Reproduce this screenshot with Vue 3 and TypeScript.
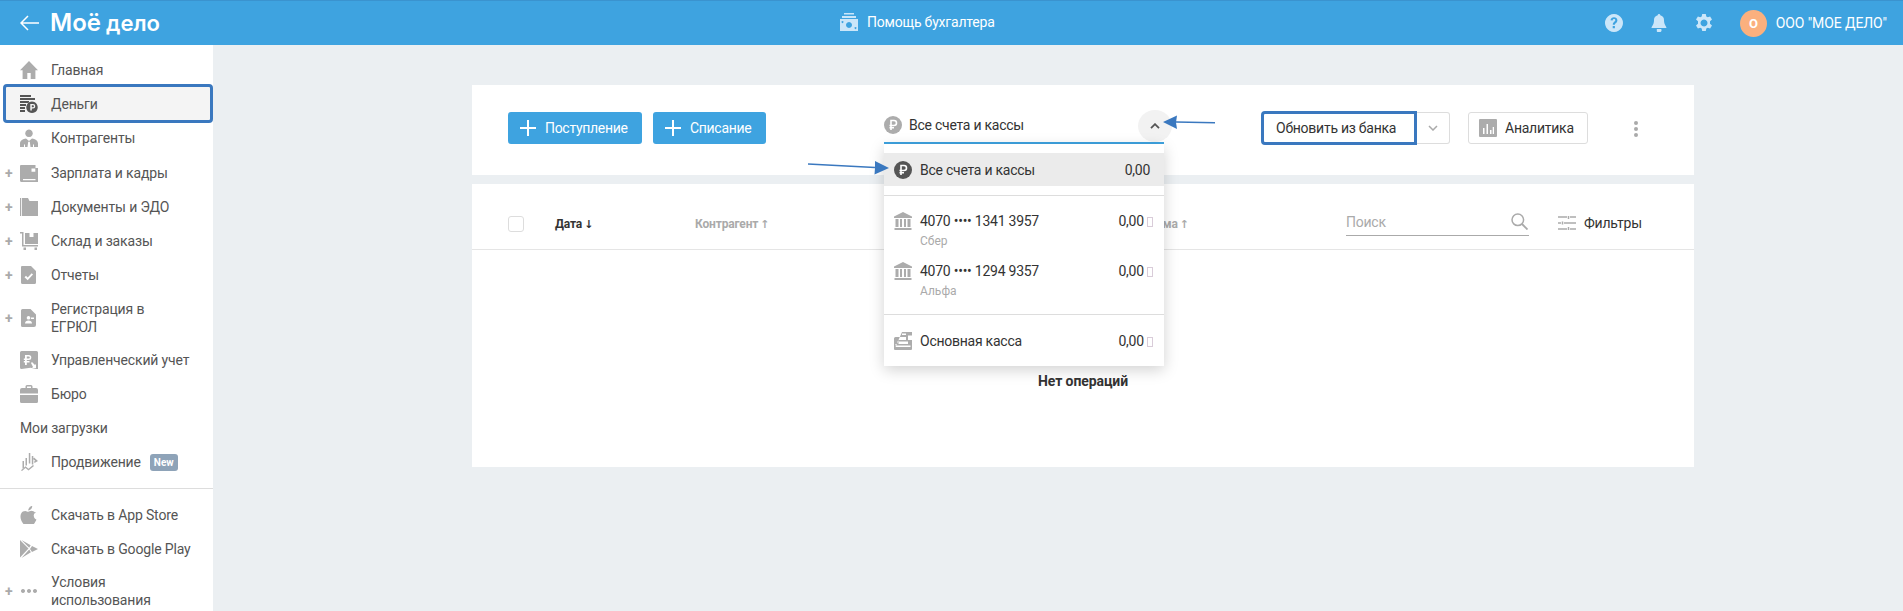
<script setup lang="ts">
interface NavItem { label: string; icon?: string; dark?: string; plus?: boolean; active?: boolean; badge?: string; wrap?: boolean }

const nav: NavItem[] = [
  { label: 'Главная', icon: 'M9 0 18 9.2h-2.6V18h-4.7v-6H7.3v6H2.600V9.200H0Z' },
  { label: 'Деньги', active: true, dark: 'M0 0h11v2H0ZM0 3h15v2H0ZM0 6h9v2H0ZM0 9h6v2H0ZM0 12h5v2H0ZM0 15h5v2H0ZM12 6.500a5.750 5.750 0 1 1-.01 0ZM10.300 9v6.500h1.500v-2H13a2.250 2.250 0 0 0 0-4.500Zm1.500 1.300H13a.95.95 0 0 1 0 1.900h-1.200Z' },
  { label: 'Контрагенты', icon: 'M9 .5a3.800 3.800 0 1 1-.01 0ZM0 18v-3.500C0 11.500 3 10 6 9.500l3 2.500 3-2.500c3 .5 6 2 6 5V18h-4v-2.500h-1V18H5v-2.500H4V18ZM8.200 12.800h1.600l.7 5.200h-3Z' },
  { label: 'Зарплата и кадры', plus: true, icon: 'M1 1h14.500v3H18v14H1.500A1.500 1.500 0 0 1 0 16.500V2a1 1 0 0 1 1-1Zm10.500 3.500v3.200h3.800V4.500ZM3 15v1.200h12.500V15Z' },
  { label: 'Документы и ЭДО', plus: true, icon: 'M0 0h1.200v18H0ZM2 0h6l1.500 3H18v15H2Z' },
  { label: 'Склад и заказы', plus: true, icon: 'M0 0h3.500v13H18v1.500H2V1.500H0ZM5 1h13v11H5Zm4.500 0v4h4V1ZM3.500 15.500h2.500V18H3.500Zm11 0H17V18h-2.500Z' },
  { label: 'Отчеты', plus: true, icon: 'M2 0h9l5 5v11.500a1.500 1.500 0 0 1-1.500 1.500h-12A1.500 1.500 0 0 1 1 16.500V1a1 1 0 0 1 1-1Zm2.500 11.200L6 9.800l1.700 1.800 4-4.300 1.300 1.300-5.300 5.700Z' },
  { label: 'Регистрация в ЕГРЮЛ', plus: true, wrap: true, icon: 'M2.500 0h8l5.500 5.500V16a2 2 0 0 1-2 2H2.500a1.500 1.500 0 0 1-1.500-1.500v-15A1.500 1.500 0 0 1 2.500 0ZM8.500 7a1.800 1.800 0 1 0 .01 0ZM5 14.500c0-1.800 1.500-3 3.500-3s3.500 1.200 3.500 3ZM11 8.500h3V10h-3Z' },
  { label: 'Управленческий учет', icon: 'M1.500 0h15A1.500 1.500 0 0 1 18 1.500V18h-1.500l-6-1.200L1.500 18A1.500 1.500 0 0 1 0 16.500v-15A1.500 1.500 0 0 1 1.500 0ZM5 4v3.500H3.800V9H5v1H3.800v1.400H5V14h1.800v-2.600h2.700V10H6.800V9h2a2.500 2.500 0 0 0 0-5Zm1.800 1.500h2a1 1 0 0 1 0 2h-2ZM11 12l1-1 3 3 1-1v4h-4l1-1Z' },
  { label: 'Бюро', icon: 'M5.500 3V1.500A1.500 1.500 0 0 1 7 0h4a1.500 1.500 0 0 1 1.500 1.500V3H16a2 2 0 0 1 2 2v3.500H0V5a2 2 0 0 1 2-2ZM7 1.500V3h4V1.500ZM0 10h18v6.500a1.500 1.500 0 0 1-1.500 1.500h-15A1.500 1.500 0 0 1 0 16.500Z' },
  { label: 'Мои загрузки' },
  { label: 'Продвижение', badge: 'New', icon: 'M5.500 5h1.500v7.500H5.500ZM8.800 0h1.500v10.500H8.800ZM2.500 8H4v6.800l-1.500 1.500ZM11.800 3h1.500v8.500h-1.500ZM1 17.200l4.500-4 3 2.500 4.500-3.800 1 1-5.500 4.600-3-2.500-3.500 3ZM14 4.500 18 8l-3.500 2-.5-1.500 1.200-.6-2-1.800Z' }
];

const extra: NavItem[] = [
  { label: 'Скачать в App Store', icon: 'M12.200 0c.1 1.300-.4 2.300-1.100 3.100-.8.900-1.800 1.400-2.800 1.300-.1-1.200.4-2.300 1.100-3C10.100.6 11.300 0 12.200 0ZM15.700 6.200c-.1.100-2.100 1.200-2 3.600.1 2.800 2.600 3.800 2.700 3.800-.1.300-.6 1.700-1.600 3.200-.9 1.200-1.700 2.200-3 2.200-1.300 0-1.700-.8-3.200-.8s-2 .8-3.200.8c-1.300.1-2.200-1.200-3-2.400C.8 14.200-.4 10 1.300 7.200c.8-1.400 2.300-2.300 3.900-2.300 1.200 0 2.300.8 3.100.8.700 0 2-1 3.500-.8.600 0 2.400.2 3.900 2.300Z' },
  { label: 'Скачать в Google Play', icon: 'M0 0 8.500 8.500 0 17.500ZM1.500 0l9.200 5.200-1.500 2.600ZM1.500 18l7.700-8.500 1.700 2.700ZM12 6l6 3-6 3-2-3Z' },
  { label: 'Условия использования', plus: true, wrap: true, icon: 'M3 7a2 2 0 1 1-.01 0ZM9 7a2 2 0 1 1-.01 0ZM15 7a2 2 0 1 1-.01 0Z' }
];

const bankRows = [
  { num: '4070 •••• 1341 3957', bank: 'Сбер' },
  { num: '4070 •••• 1294 9357', bank: 'Альфа' }
];
const bankIcon = 'M9 0 18 4.500V6H0V4.500ZM1.500 7h3v8h-3ZM6 7h2v8H6ZM10 7h2v8h-2ZM13.500 7h3v8h-3ZM.5 16h17v2H.5Z';
</script>

<template>
  <div class="app">
    <header class="topbar">
      <div class="brand">
        <svg class="back" viewBox="0 0 19 16" width="19" height="16"><path d="M8 1 1 8l7 7M1 8h18" fill="none" stroke="#fff" stroke-width="1.500" /></svg>
        <span class="logo">Моё <span class="logo-sub">дело</span></span>
      </div>
      <div class="helper">
        <svg viewBox="0 0 18 18" width="18" height="18"><path d="M4 0h10v1.500H4ZM2 3h14v2H2ZM0 6h18v12H0ZM9 9a3 3 0 1 0 .01 0ZM2.500 8a1 1 0 1 0 .01 0ZM15.500 14a1 1 0 1 0 .01 0Z" fill="#cbe6f9" fill-rule="evenodd" /></svg>
        <span>Помощь бухгалтера</span>
      </div>
      <div class="user">
        <svg class="tool" viewBox="0 0 18 18" width="18" height="18"><path d="M9 0a9 9 0 1 1-.01 0ZM9.800 10.700c0-1.500 2.600-2 2.600-4.300 0-2-1.600-3.100-3.400-3.100-1.900 0-3.200 1-3.500 3l2.100.3c.1-1 .6-1.500 1.400-1.500s1.300.5 1.300 1.200c0 1.300-2.500 1.800-2.500 4.400ZM7.700 12v2.300h2.200V12Z" fill="#cbe6f9" fill-rule="evenodd" /></svg>
        <svg class="tool" viewBox="0 0 18 18" width="18" height="18"><path d="M9 0a1.300 1.300 0 0 1 1.300 1.300 5 5 0 0 1 3.700 5c0 4.500 2.500 6.200 2.500 7.700H1.500c0-1.500 2.500-3.200 2.500-7.700a5 5 0 0 1 3.700-5A1.300 1.300 0 0 1 9 0ZM6.800 15h4.400a2.200 2.200 0 0 1-4.400 2.200Z" fill="#cbe6f9" /></svg>
        <svg class="tool last" viewBox="0 0 18 18" width="18" height="18"><path d="M7.200 0h3.600l.5 2.500 1.500.8L15.100 2.400l1.900 3.100-2 1.700v2.600l2 1.700-1.900 3.100-2.300-.9-1.500.8-.5 2.500H7.200l-.5-2.500-1.500-.8-2.300.9L1 11.500l2-1.700V7.200L1 5.500l1.900-3.100 2.300.9 1.500-.8ZM9 5.500a3.500 3.500 0 1 0 .01 0Z" fill="#cbe6f9" fill-rule="evenodd" /></svg>
        <span class="avatar">О</span>
        <span class="company">ООО "МОЕ ДЕЛО"</span>
      </div>
    </header>

    <div class="body">
      <aside class="sidebar">
        <ul class="nav">
          <li v-for="item in nav" :key="item.label" class="nav-row" :class="{ active: item.active, tall: item.wrap }">
            <span class="plus">{{ item.plus ? '+' : '' }}</span>
            <svg v-if="item.icon" class="nav-icon" viewBox="0 0 18 18" width="18" height="18"><path :d="item.icon" fill="#acacac" fill-rule="evenodd" /></svg>
            <svg v-else-if="item.dark" class="nav-icon" viewBox="0 0 18 18" width="18" height="18"><path :d="item.dark" fill="#555" fill-rule="evenodd" /></svg>
            <span class="nav-label" :class="{ wrap: item.wrap }">{{ item.label }}</span>
            <span v-if="item.badge" class="badge">{{ item.badge }}</span>
          </li>
        </ul>
        <div class="nav-divider"></div>
        <ul class="nav">
          <li v-for="item in extra" :key="item.label" class="nav-row">
            <span class="plus">{{ item.plus ? '+' : '' }}</span>
            <svg class="nav-icon" viewBox="0 0 18 18" width="18" height="18"><path :d="item.icon" fill="#acacac" fill-rule="evenodd" /></svg>
            <span class="nav-label" :class="{ wrap: item.wrap }">{{ item.label }}</span>
          </li>
        </ul>
      </aside>

      <main class="main">
        <section class="card toolbar">
          <button class="btn primary wide"><span class="cross"></span>Поступление</button>
          <button class="btn primary narrow"><span class="cross"></span>Списание</button>

          <div class="select">
            <svg viewBox="0 0 18 18" width="18" height="18"><circle cx="9" cy="9" r="9" fill="#acacac" /><path d="M7 14V4.500h3a2.400 2.400 0 0 1 0 5H5.500M5.500 11.800H10" fill="none" stroke="#fff" stroke-width="1.600" /></svg>
            <span class="select-text">Все счета и кассы</span>
            <span class="chevron-wrap">
              <svg viewBox="0 0 10 6" width="10" height="6"><path d="M1 5.200 5 1.200l4 4" fill="none" stroke="#555" stroke-width="1.800" /></svg>
            </span>

            <div class="dropdown">
              <div class="all-row">
                <svg viewBox="0 0 18 18" width="18" height="18"><circle cx="9" cy="9" r="9" fill="#555" /><path d="M7 14V4.500h3a2.400 2.400 0 0 1 0 5H5.500M5.500 11.800H10" fill="none" stroke="#fff" stroke-width="1.600" /></svg>
                <span class="dd-name">Все счета и кассы</span>
                <span class="all-sum">0,00</span>
              </div>
              <div class="dd-divider first"></div>
              <div class="bank-list">
                <div v-for="row in bankRows" :key="row.num" class="bank-row">
                  <svg viewBox="0 0 18 18" width="18" height="18"><path :d="bankIcon" fill="#acacac" /></svg>
                  <div class="bank-text">
                    <span class="dd-name">{{ row.num }}</span>
                    <span class="bank-name">{{ row.bank }}</span>
                  </div>
                  <span class="sum">0,00 <i class="tofu"></i></span>
                </div>
              </div>
              <div class="dd-divider"></div>
              <div class="cash-row">
                <svg viewBox="0 0 18 18" width="18" height="18"><path d="M8 0h10v3.500h-4V8h4v9a1 1 0 0 1-1 1H1a1 1 0 0 1-1-1V6.500A1.500 1.500 0 0 1 1.500 5H12v3H4.500v4H14V9.500H3V12H1.500v1.500h15V15h-15ZM8 0v1.500h4V3H8Z" fill="#acacac" fill-rule="evenodd" /></svg>
                <span class="dd-name">Основная касса</span>
                <span class="sum">0,00 <i class="tofu"></i></span>
              </div>
            </div>
          </div>

          <div class="split">
            <button class="btn ghost refresh">Обновить из банка</button>
            <button class="btn ghost caret">
              <svg viewBox="0 0 10 6" width="10" height="6"><path d="M1 1l4 4 4-4" fill="none" stroke="#aaa" stroke-width="1.500" /></svg>
            </button>
          </div>
          <button class="btn ghost analytics">
            <svg viewBox="0 0 18 18" width="18" height="18"><path d="M1 0h16a1 1 0 0 1 1 1v16a1 1 0 0 1-1 1H1a1 1 0 0 1-1-1V1a1 1 0 0 1 1-1Zm3 9v6h1.500V9Zm3.500-4v10H9V5Zm3.500 6v4h1.500v-4Zm2.700-3v7h1.300V8Z" fill="#acacac" fill-rule="evenodd" /></svg>
            Аналитика
          </button>
          <span class="dots"><i></i><i></i><i></i></span>
        </section>

        <section class="card list">
          <div class="list-head">
            <span class="check"></span>
            <span class="col date">Дата<b>↓</b></span>
            <span class="col partner">Контрагент<b>↑</b></span>
            <span class="col amount">Сумма<b>↑</b></span>
            <div class="search">
              <span>Поиск</span>
              <svg viewBox="0 0 17 17" width="17" height="17"><circle cx="6.800" cy="6.800" r="5.800" fill="none" stroke="#aaa" stroke-width="1.500" /><path d="m11 11 5.500 5.500" stroke="#aaa" stroke-width="1.800" /></svg>
            </div>
            <div class="filters">
              <svg viewBox="0 0 18 14" width="18" height="14"><path d="M0 1h9M12 1h6M10.500 0v3M0 7h3M6 7h12M4.500 5.500v3M0 13h9M12 13h6M10.500 11v3" fill="none" stroke="#aaa" stroke-width="1.500" /></svg>
              <span>Фильтры</span>
            </div>
          </div>
          <div class="empty">Нет операций</div>
        </section>
      </main>
    </div>

    <svg class="annotations" width="1903" height="611" viewBox="0 0 1903 611">
      <path d="M1215 122.800 1176 122" stroke="#3a78bf" stroke-width="1.600" fill="none" />
      <path d="M1163 122 1177 115.500 1176 122.500 1177 129Z" fill="#3a78bf" />
      <path d="M808 164 875 167.500" stroke="#3a78bf" stroke-width="1.600" fill="none" />
      <path d="M889 168 875 161 875 168 874.500 174.500Z" fill="#3a78bf" />
    </svg>
  </div>
</template>

<style>
html, body { overflow: hidden; background: #ebeff2; }
</style>

<style scoped>
.app {
  position: relative;
  height: 611px;
  overflow: hidden;
  background: #ebeff2;
  font-family: Roboto, "Liberation Sans", sans-serif;
  font-size: 14px;
  letter-spacing: -0.250px;
  color: #333;
}
ul { list-style: none; margin: 0; padding: 0; }
button { font-family: inherit; cursor: pointer; letter-spacing: inherit; }

.topbar {
  height: 45px;
  box-sizing: border-box;
  background: #3ea3e0;
  border-top: 1px solid #3a93cf;
  display: grid;
  grid-template-columns: 840px auto 1fr;
  align-items: center;
  color: #fff;
}
.brand { display: flex; align-items: center; padding-left: 20px; gap: 11px; }
.back { flex: none; }
.logo { font-family: Inter, sans-serif; font-weight: 600; font-size: 24px; line-height: 30px; letter-spacing: 0; white-space: nowrap; }
.logo-sub { font-size: 22px; margin-left: -1px; }
.helper { display: flex; align-items: center; gap: 9px; margin-top: -3px; letter-spacing: -0.200px; }
.user { display: flex; align-items: center; justify-content: flex-end; padding-right: 16px; }
.tool { margin-right: 27px; }
.tool.last { margin-right: 29px; }
.avatar {
  width: 27px; height: 27px; border-radius: 50%;
  background: #fbb07e; color: #fff;
  display: flex; align-items: center; justify-content: center;
  font-weight: 700; font-size: 13px; margin-left: -2px;
}
.company { margin-left: 9px; letter-spacing: -0.100px; }

.body { display: flex; height: 566px; }
.sidebar { flex: none; width: 213px; background: #fff; padding-top: 8px; box-sizing: border-box; color: #555; letter-spacing: -0.150px; }
.nav-row {
  position: relative;
  display: flex;
  align-items: center;
  min-height: 34.200px;
  box-sizing: border-box;
  padding: 7px 0 7px 5px;
  line-height: 18px;
}
.nav-row.tall { min-height: 50.500px; }
.nav-row.active::before {
  content: "";
  position: absolute;
  inset: -3px 0 -2px 3px;
  background: #f4f4f4;
  border: 3px solid #3a78bf;
  border-radius: 4px;
  box-sizing: border-box;
}
.nav-row > * { position: relative; }
.plus { flex: none; width: 15px; color: #aaa; font-weight: 700; }
.nav-icon { flex: none; margin-right: 13px; }
.nav-label { white-space: nowrap; }
.nav-label.wrap { white-space: normal; max-width: 115px; }
.badge {
  margin-left: 9px;
  background: #8ea3b8; color: #fff;
  font-size: 10px; font-weight: 700; line-height: 17px;
  padding: 0 4px; border-radius: 3px; letter-spacing: 0;
}
.nav-divider { height: 1px; background: #ddd; margin: 8.500px 0 9px; }

.main { flex: 1; padding: 40px 209px 0 259px; min-width: 0; }
.card { background: #fff; }

.toolbar {
  height: 90px;
  box-sizing: border-box;
  padding: 27px 0 0 36px;
  display: flex;
  align-items: flex-start;
}
.btn {
  height: 32px;
  box-sizing: border-box;
  border-radius: 3px;
  font-size: 14px;
  display: inline-flex;
  align-items: center;
  padding: 0;
}
.primary { background: #3ea3e0; border: 0; color: #fff; padding-left: 12px; letter-spacing: -0.300px; }
.wide { width: 134px; }
.narrow { width: 113px; margin-left: 11px; }
.cross {
  position: relative; flex: none;
  width: 16px; height: 16px; margin-right: 9px;
  background:
    linear-gradient(#fff, #fff) center / 16px 2px no-repeat,
    linear-gradient(#fff, #fff) center / 2px 16px no-repeat;
}

.select {
  position: relative;
  width: 280px;
  height: 28px;
  box-sizing: content-box;
  margin-left: 118px;
  margin-top: -1px;
  padding-bottom: 3px;
  border-bottom: 2px solid #3ea3e0;
  display: flex;
  align-items: center;
}
.select-text { margin-left: 7px; }
.chevron-wrap {
  position: absolute;
  right: -8px; top: -1px;
  width: 34px; height: 32px;
  border-radius: 50%;
  background: #f2f2f2;
  display: flex; align-items: center; justify-content: center;
}
.dropdown {
  position: absolute;
  z-index: 3;
  left: 0; top: 33px;
  width: 280px; height: 222px;
  background: #fff;
  box-shadow: 0 4px 14px rgba(0, 0, 0, .18);
  padding-top: 9px;
  box-sizing: border-box;
}
.all-row {
  height: 33px;
  background: #ebebeb;
  display: flex;
  align-items: center;
  padding: 0 14px 0 10px;
}
.dd-name { color: #333; }
.all-row .dd-name, .cash-row .dd-name { margin-left: 8px; }
.all-sum { margin-left: auto; }
.dd-divider { height: 1px; background: #ddd; }
.dd-divider.first { margin-top: 9px; }
.bank-list { padding-top: 16px; height: 118px; box-sizing: border-box; }
.bank-row { display: flex; align-items: flex-start; padding: 0 11px 0 10px; height: 50px; }
.bank-text { display: flex; flex-direction: column; margin-left: 8px; line-height: 18px; }
.bank-name { font-size: 12px; color: #aaa; line-height: 20px; margin-top: 1px; letter-spacing: 0; }
.sum { margin-left: auto; line-height: 18px; white-space: nowrap; }
.tofu { display: inline-block; width: 4px; height: 8px; border: 1px solid #d9ccd9; vertical-align: -0.500px; }
.cash-row { display: flex; align-items: center; padding: 17px 11px 0 10px; }

.split { display: flex; margin-left: 98px; }
.ghost { background: #fff; border: 1px solid #ddd; color: #333; }
.refresh {
  width: 154px; padding-left: 13px;
  border-radius: 3px 0 0 3px;
  outline: 3px solid #3a78bf; outline-offset: -2px;
  position: relative;
}
.caret { width: 34px; justify-content: center; border-left: 0; border-radius: 0 3px 3px 0; }
.analytics { width: 120px; margin-left: 18px; padding-left: 10px; gap: 8px; }
.dots { display: flex; flex-direction: column; gap: 2px; margin: 9px 0 0 46px; }
.dots i { width: 4px; height: 4px; border-radius: 50%; background: #aaa; }

.list { margin-top: 9px; height: 283px; }
.list-head {
  height: 66px;
  box-sizing: border-box;
  padding: 14px 0 0 36px;
  border-bottom: 1px solid #e5e5e5;
  display: flex;
  align-items: center;
}
.check { flex: none; width: 16px; height: 16px; box-sizing: border-box; border: 1px solid #ddd; border-radius: 3px; }
.col { font-size: 12px; font-weight: 700; letter-spacing: -0.150px; }
.col b { font-family: "DejaVu Sans", sans-serif; font-size: 11px; font-weight: 700; margin-left: 2px; }
.date { margin-left: 31px; width: 140px; color: #333; flex: none; }
.partner { color: #aaa; flex: none; width: 445px; }
.amount { color: #aaa; flex: none; width: 206px; }
.search {
  flex: none;
  width: 183px; height: 28px;
  box-sizing: border-box;
  border-bottom: 1px solid #aaa;
  display: flex; align-items: center; justify-content: space-between;
  color: #aaa; margin-top: -3px;
}
.search svg { margin-right: 1px; }
.filters { display: flex; align-items: center; gap: 8px; margin-left: 29px; margin-top: -1px; }
.empty {
  height: 217px;
  box-sizing: border-box;
  padding-top: 123px;
  text-align: center;
  font-weight: 700;
  letter-spacing: -0.100px;
}

.annotations { position: absolute; left: 0; top: 0; pointer-events: none; z-index: 5; }
</style>
